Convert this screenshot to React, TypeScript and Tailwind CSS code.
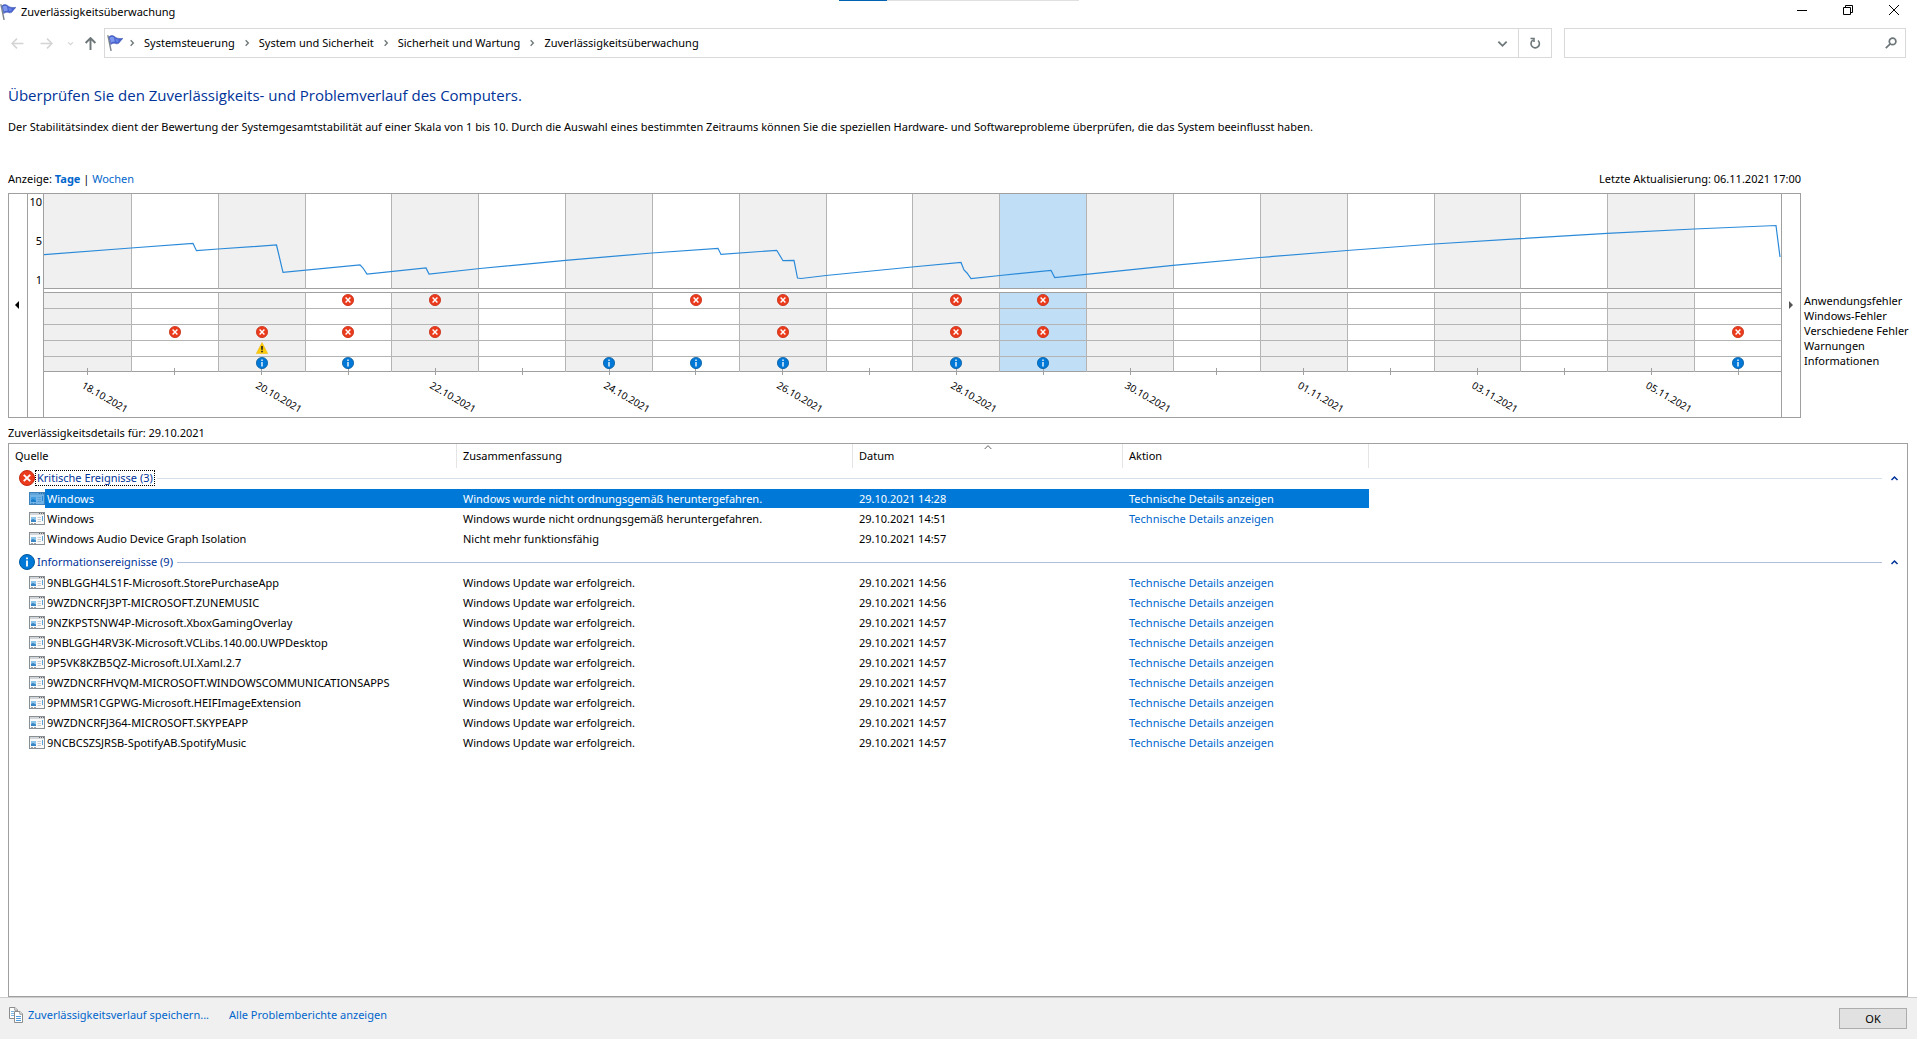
import React from "react";

type Kind = "error" | "warning" | "info";

const CATEGORIES: { label: string; kind: Kind; days: number[] }[] = [
  { label: "Anwendungsfehler", kind: "error", days: [3, 4, 7, 8, 10, 11] },
  { label: "Windows-Fehler", kind: "error", days: [] },
  { label: "Verschiedene Fehler", kind: "error", days: [1, 2, 3, 4, 8, 10, 11, 19] },
  { label: "Warnungen", kind: "warning", days: [2] },
  { label: "Informationen", kind: "info", days: [2, 3, 6, 7, 8, 10, 11, 19] },
];

const DAYS = [
  "18.10.2021", "19.10.2021", "20.10.2021", "21.10.2021", "22.10.2021",
  "23.10.2021", "24.10.2021", "25.10.2021", "26.10.2021", "27.10.2021",
  "28.10.2021", "29.10.2021", "30.10.2021", "31.10.2021", "01.11.2021",
  "02.11.2021", "03.11.2021", "04.11.2021", "05.11.2021", "06.11.2021",
];
const SELECTED_DAY = 11;

const STABILITY =
  "0,60.7 87,54 149,49.500 152.500,56.700 174,55 232.500,51 239,78.300 316,70.800 319,74 323,80 382,74 385,80 436,74.500 521.600,66.300 608,59 674,54.300 677,60.400 732.700,56.300 739,66.700 750,66.300 753.500,84 757,84.500 782,81.500 868,73 917,68.500 920,76 923,79 927,84.700 956,81.500 1007,76.300 1010.700,83.500 1042,80.300 1129,71.300 1216,63.500 1303,56.500 1390,50 1476,44.700 1563,39.300 1650,35 1732,31.500 1736,63";

type Entry = { source: string; summary: string; date: string; action?: boolean; selected?: boolean };

const DOWN = "Windows wurde nicht ordnungsgemäß heruntergefahren.";
const UPDATED = "Windows Update war erfolgreich.";

const CRITICAL: Entry[] = [
  { source: "Windows", summary: DOWN, date: "29.10.2021 14:28", action: true, selected: true },
  { source: "Windows", summary: DOWN, date: "29.10.2021 14:51", action: true },
  { source: "Windows Audio Device Graph Isolation", summary: "Nicht mehr funktionsfähig", date: "29.10.2021 14:57" },
];

const INFORMATION: Entry[] = [
  { source: "9NBLGGH4LS1F-Microsoft.StorePurchaseApp", summary: UPDATED, date: "29.10.2021 14:56", action: true },
  { source: "9WZDNCRFJ3PT-MICROSOFT.ZUNEMUSIC", summary: UPDATED, date: "29.10.2021 14:56", action: true },
  { source: "9NZKPSTSNW4P-Microsoft.XboxGamingOverlay", summary: UPDATED, date: "29.10.2021 14:57", action: true },
  { source: "9NBLGGH4RV3K-Microsoft.VCLibs.140.00.UWPDesktop", summary: UPDATED, date: "29.10.2021 14:57", action: true },
  { source: "9P5VK8KZB5QZ-Microsoft.UI.Xaml.2.7", summary: UPDATED, date: "29.10.2021 14:57", action: true },
  { source: "9WZDNCRFHVQM-MICROSOFT.WINDOWSCOMMUNICATIONSAPPS", summary: UPDATED, date: "29.10.2021 14:57", action: true },
  { source: "9PMMSR1CGPWG-Microsoft.HEIFImageExtension", summary: UPDATED, date: "29.10.2021 14:57", action: true },
  { source: "9WZDNCRFJ364-MICROSOFT.SKYPEAPP", summary: UPDATED, date: "29.10.2021 14:57", action: true },
  { source: "9NCBCSZSJRSB-SpotifyAB.SpotifyMusic", summary: UPDATED, date: "29.10.2021 14:57", action: true },
];

function FlagIcon() {
  return (
    <svg className="size-4 shrink-0" viewBox="0 0 16 16" aria-hidden="true">
      <path d="M1 .8 4 15.5" stroke="#7d858c" strokeWidth="1.4" strokeLinecap="round" />
      <path d="M2 1.800C3.600.4 5.600.2 7.400 1.400 8.600 2.400 9.600 3 10.600 3.200 12.200 3.700 14 3.600 15.900 3.400 14.800 4.800 13.200 5.800 12.400 7.600 11.600 8.800 10 9 8.600 8.600 7 8 5 8.200 3.800 9.600Z" fill="#4763cf" stroke="#3247a8" strokeWidth=".5" />
      <path d="M2.800 2.400C4.200 1.400 5.800 1.400 7 2.400L7.800 6.800C6.400 6.400 5 6.800 4 7.800Z" fill="#7f98ee" />
      <path d="M8.200 3.400 11.800 4.800 11.300 7.200 9 7Z" fill="#6480e4" />
    </svg>
  );
}

function StatusIcon({ kind, className }: { kind: Kind; className: string }) {
  if (kind === "warning")
    return (
      <svg className={className} viewBox="0 0 12 12" aria-hidden="true">
        <path d="M6 .5 11.700 11.500H.300Z" fill="#fbcb09" stroke="#f0b400" strokeWidth=".5" strokeLinejoin="round" />
        <path d="M6 4V7.800M6 8.800V10.300" stroke="#1f1f1f" strokeWidth="1.6" />
      </svg>
    );
  if (kind === "info")
    return (
      <svg className={className} viewBox="0 0 16 16" aria-hidden="true">
        <circle cx="8" cy="8" r="7.500" fill="#0078d7" stroke="#005a9e" />
        <path d="M8 6.600V12.500M8 3.400V5.200" stroke="#fff" strokeWidth="1.800" />
      </svg>
    );
  return (
    <svg className={className} viewBox="0 0 16 16" aria-hidden="true">
      <circle cx="8" cy="8" r="7.500" fill="#eb3b1c" stroke="#c42b12" />
      <path d="m4.800 4.800 6.400 6.400M11.200 4.800 4.800 11.200" stroke="#fff" strokeWidth="1.900" />
    </svg>
  );
}

function AppIcon({ selected }: { selected?: boolean }) {
  return (
    <svg className="h-[13px] w-4 shrink-0" viewBox="0 0 16 13" aria-hidden="true">
      <rect x=".5" y=".5" width="15" height="12" fill="#fafafa" stroke="#8a8f94" />
      <path d="M1 2H15" stroke="#d3d7da" strokeWidth="2" />
      <path d="M10 1.500h1M12 1.500h1M14 1.500h1" stroke="#666" />
      <rect x="2" y="5" width="5" height="5" fill="#8cc4ea" />
      <path d="M2 10V8L4 7l3 1.500V10Z" fill="#3a86c4" />
      <path d="M8.500 5.500H12M8.500 7.500H12M8.500 9.500H12" stroke="#c9cdd0" />
      <path d="M13.500 4V9" stroke="#5aa2da" />
      <path d="M2 11.500H4M5 11.500H7" stroke="#9aa0a5" />
      {selected && <rect width="16" height="13" fill="#0078d7" opacity=".55" />}
    </svg>
  );
}

function Stroke({ d, className, width = 1.5 }: { d: string; className: string; width?: number }) {
  return (
    <svg className={className} viewBox="0 0 12 12" fill="none" stroke="currentColor" strokeWidth={width} aria-hidden="true">
      <path d={d} />
    </svg>
  );
}

function TitleBar() {
  return (
    <header className="relative flex h-6 items-start justify-between">
      <div className="absolute top-0 left-1/2 flex h-px w-60 -translate-x-1/2">
        <span className="w-12 bg-[#0063b1]" />
        <span className="flex-1 bg-[#e0e0e0]" />
      </div>
      <div className="flex items-center gap-[5px] pt-0.5">
        <FlagIcon />
        <span className="leading-5">Zuverlässigkeitsüberwachung</span>
      </div>
      <div className="flex">
        <button aria-label="Minimieren" className="flex h-5 w-[46px] items-center justify-center">
          <Stroke d="M1 6.500H11" width={1} className="size-3" />
        </button>
        <button aria-label="Verkleinern" className="flex h-5 w-[46px] items-center justify-center">
          <Stroke d="M1.500 3.500H8.500V10.500H1.500ZM3.500 3.500V1.500H10.500V8.500H8.500" width={1} className="size-3" />
        </button>
        <button aria-label="Schließen" className="flex h-5 w-[46px] items-center justify-center">
          <Stroke d="M1 1 11 11M11 1 1 11" width={1} className="size-3" />
        </button>
      </div>
    </header>
  );
}

function NavBar() {
  const crumbs = ["Systemsteuerung", "System und Sicherheit", "Sicherheit und Wartung", "Zuverlässigkeitsüberwachung"];
  return (
    <nav className="mt-1 flex h-[30px] items-stretch pr-[11px] pl-[11px]">
      <div className="flex w-[93px] items-center text-[#d4d4d4]">
        <button aria-label="Zurück" className="mr-4">
          <Stroke d="M11.500 6H1M5.500 1.500 1 6 5.500 10.500" className="size-[13px]" />
        </button>
        <button aria-label="Vorwärts" className="mr-[14px]">
          <Stroke d="M.5 6H11M6.500 1.500 11 6 6.500 10.500" className="size-[13px]" />
        </button>
        <button aria-label="Zuletzt besucht" className="mr-2.5">
          <Stroke d="M2 4 6 8 10 4" width={2} className="size-[7px]" />
        </button>
        <button aria-label="Nach oben" className="text-[#6d7678]">
          <Stroke d="M6 12V1M1.500 5.500 6 1 10.500 5.500" width={1.8} className="size-[13px]" />
        </button>
      </div>
      <div className="flex flex-1 items-stretch border border-[#d9d9d9]">
        <div className="flex flex-1 items-center pl-0.5">
          <FlagIcon />
          {crumbs.map((c) => (
            <span key={c} className="flex items-center">
              <Stroke d="M4 2 8 6 4 10" width={2} className="mr-[6px] ml-[5px] size-2 text-[#6d7678]" />
              <a href="#" className="pr-[3px] pl-0.5">{c}</a>
            </span>
          ))}
        </div>
        <button aria-label="Verlauf" className="flex w-8 items-center justify-center text-[#6d7678]">
          <Stroke d="M1.500 4 6 8.500 10.500 4" width={2} className="size-[11px]" />
        </button>
        <button aria-label="Aktualisieren" className="flex w-[33px] items-center justify-center border-l border-[#d9d9d9] text-[#6d7678]">
          <Stroke d="M9 3.500A4.200 4.200 0 1 1 3.800 3.200M1.500 1.500H5V5" width={1.6} className="size-3" />
        </button>
      </div>
      <div className="ml-3 flex w-[342px] items-center border border-[#d9d9d9]">
        <input aria-label="Suchen" className="h-full min-w-0 flex-1 px-2 outline-none" />
        <svg className="mr-2 size-3 text-[#6d7678]" viewBox="0 0 12 12" fill="none" stroke="currentColor" strokeWidth="1.700" aria-hidden="true">
          <circle cx="7.600" cy="4.400" r="3.300" />
          <path d="M5.200 6.800.8 11.200" />
        </svg>
      </div>
    </nav>
  );
}

function columnFill(i: number) {
  if (i === SELECTED_DAY) return "bg-[#c0dff6]";
  return i % 2 === 0 ? "bg-[#f0f0f0]" : "bg-white";
}

function Chart() {
  return (
    <section className="flex pl-2">
      <div className="flex flex-1 border border-[#a0a0a0]">
        <button aria-label="Frühere Tage" className="flex w-[19px] items-center justify-center border-r border-[#a0a0a0] pr-0.5 pb-0.5">
          <svg className="h-2 w-1" viewBox="0 0 4 8" aria-hidden="true"><path d="M4 0V8L0 4Z" /></svg>
        </button>
        <div className="flex h-[95px] w-[15px] flex-col justify-between pr-px pb-px text-right leading-4">
          <span>10</span>
          <span>5</span>
          <span>1</span>
        </div>
        <div className="relative grid flex-1 grid-cols-20 border-x border-[#a0a0a0]">
          {DAYS.map((day, i) => (
            <div key={day} className="flex flex-col">
              <div className={`h-[95px] border-b border-b-[#a0a0a0] ${i > 0 ? "border-l border-l-[#b4b4b4]" : ""} ${columnFill(i)}`} />
              <div className="h-[3px]" />
              <div className={`border-t border-t-[#a0a0a0] ${i > 0 ? "border-l border-l-[#b4b4b4]" : ""} ${columnFill(i)}`}>
                {CATEGORIES.map((c) => (
                  <div key={c.label} className="flex h-4 items-start justify-center border-b border-[#b4b4b4] pt-px last:h-[15px] last:border-[#a0a0a0] last:pt-0">
                    {c.days.includes(i) && <StatusIcon kind={c.kind} className="relative z-10 size-3" />}
                  </div>
                ))}
              </div>
              <div className="relative h-[45px]">
                <span className="absolute -top-1 left-1/2 h-[7px] w-px bg-[#a0a0a0]" />
                {i % 2 === 0 && (
                  <span className="absolute top-1 left-1/2 -ml-1 origin-left rotate-30 text-[10px] leading-4">{day}</span>
                )}
              </div>
            </div>
          ))}
          <svg className="absolute top-0 left-0 h-[94px] w-full" viewBox="0 0 1737 94" preserveAspectRatio="none" aria-hidden="true">
            <polyline points={STABILITY} fill="none" stroke="#2a8ad9" strokeWidth="1.200" vectorEffect="non-scaling-stroke" />
          </svg>
        </div>
        <button aria-label="Spätere Tage" className="flex w-[18px] items-center justify-center pb-0.5">
          <svg className="h-2 w-1" viewBox="0 0 4 8" fill="#555" aria-hidden="true"><path d="M0 0V8L4 4Z" /></svg>
        </button>
      </div>
      <ul className="w-[116px] pt-[100px] pl-[3px] leading-[15px] whitespace-nowrap">
        {CATEGORIES.map((c) => <li key={c.label}>{c.label}</li>)}
      </ul>
    </section>
  );
}

function GroupRow({ kind, label, focused }: { kind: Kind; label: string; focused?: boolean }) {
  return (
    <tr className="align-top">
      <td colSpan={5} className={focused ? "h-[21px] p-0 pt-0.5" : "h-6 p-0 pt-[5px]"}>
        <div className="flex items-center pl-2.5">
          <StatusIcon kind={kind} className="size-4 shrink-0" />
          <span className={`border border-dotted px-px leading-[14px] text-[#003399] ${focused ? "border-black" : "border-transparent"}`}>{label}</span>
          <span className={`ml-0.5 h-px flex-1 ${focused ? "bg-[#d5dfe9]" : "bg-[#b0bfdd]"}`} />
          <button aria-label="Gruppe reduzieren" className="mr-2 ml-2 text-[#003399]">
            <Stroke d="M2 8 6 4 10 8" width={2} className="size-[9px]" />
          </button>
        </div>
      </td>
    </tr>
  );
}

function EntryRow({ entry }: { entry: Entry }) {
  const fill = entry.selected ? "bg-[#0078d7] text-white" : "";
  const cell = `block h-[19px] pl-1.5 leading-[19px] ${fill}`;
  return (
    <tr className="h-5 align-top">
      <td className="p-0">
        <div className="flex items-center pl-5">
          <AppIcon selected={entry.selected} />
          <span className={`h-[19px] flex-1 pl-0.5 leading-[19px] ${fill}`}>{entry.source}</span>
        </div>
      </td>
      <td className="p-0"><span className={cell}>{entry.summary}</span></td>
      <td className="p-0"><span className={cell}>{entry.date}</span></td>
      <td className="p-0">
        <span className={cell}>
          {entry.action && <a href="#" className={entry.selected ? "text-white" : "text-[#0066cc]"}>Technische Details anzeigen</a>}
        </span>
      </td>
      <td className="p-0" />
    </tr>
  );
}

function Details() {
  return (
    <section className="mr-[9px] ml-2 flex-1 border border-[#a0a0a0]">
      <table className="w-full table-fixed border-separate border-spacing-0 whitespace-nowrap">
        <colgroup>
          <col className="w-[448px]" />
          <col className="w-[396px]" />
          <col className="w-[270px]" />
          <col className="w-[246px]" />
          <col />
        </colgroup>
        <thead>
          <tr className="h-6 text-left">
            <th className="border-r border-[#e5e5e5] p-0 pl-1.5 font-normal">Quelle</th>
            <th className="border-r border-[#e5e5e5] p-0 pl-1.5 font-normal">Zusammenfassung</th>
            <th className="relative border-r border-[#e5e5e5] p-0 pl-1.5 font-normal">
              Datum
              <Stroke d="M1 9 6 4 11 9" width={1.4} className="absolute -top-px left-1/2 size-2 -translate-x-1/2 text-[#555]" />
            </th>
            <th className="border-r border-[#e5e5e5] p-0 pl-1.5 font-normal">Aktion</th>
            <th className="p-0" />
          </tr>
        </thead>
        <tbody>
          <GroupRow kind="error" label="Kritische Ereignisse (3)" focused />
          {CRITICAL.map((e) => <EntryRow key={e.date} entry={e} />)}
          <GroupRow kind="info" label="Informationsereignisse (9)" />
          {INFORMATION.map((e) => <EntryRow key={e.source} entry={e} />)}
        </tbody>
      </table>
    </section>
  );
}

function Footer() {
  return (
    <footer className="flex h-[42px] items-start border-t border-[#ccc] bg-[#f0f0f0] pr-[10px] pl-[9px]">
      <svg className="mt-[9px] h-4 w-[14px] shrink-0" viewBox="0 0 14 16" fill="#fff" stroke="#8c8c8c" aria-hidden="true">
        <path d="M.5.5H6L8.500 3V11.500H.500Z" />
        <path d="M5.800.5V3.200H8.500" />
        <path d="M2 4.500H5M2 6.500H5M2 8.500H5" stroke="#79b4e6" />
        <path d="M5.500 4.500H11L13.500 7V15.500H5.500Z" />
        <path d="M10.800 4.500V7.200H13.500" />
        <path d="M7 9.500H12M7 11.500H12M7 13.500H12" stroke="#4f9de0" />
      </svg>
      <a href="#" className="mt-2 ml-[5px] leading-[18px] text-[#0066cc]">Zuverlässigkeitsverlauf speichern...</a>
      <a href="#" className="mt-2 ml-5 leading-[18px] text-[#0066cc]">Alle Problemberichte anzeigen</a>
      <button className="mt-2.5 ml-auto h-[21px] w-[68px] border border-[#adadad] bg-[#e1e1e1] leading-[18px]">OK</button>
    </footer>
  );
}

export default function App() {
  return (
    <div className="flex min-h-screen flex-col bg-white font-['Noto_Sans','Open_Sans',sans-serif] text-[11px] leading-4 text-black">
      <TitleBar />
      <NavBar />
      <h1 className="mt-[27px] pl-2 font-['Open_Sans','Noto_Sans',sans-serif] text-[15px] leading-5 text-[#003399]">Überprüfen Sie den Zuverlässigkeits- und Problemverlauf des Computers.</h1>
      <p className="mt-[14px] pl-2">
        Der Stabilitätsindex dient der Bewertung der Systemgesamtstabilität auf einer Skala von 1 bis 10. Durch die Auswahl eines bestimmten Zeitraums können Sie die speziellen Hardware- und Softwareprobleme überprüfen, die das System beeinflusst haben.
      </p>
      <div className="mt-9 mb-[6px] flex justify-between pr-[116px] pl-2">
        <span>
          Anzeige: <a href="#" className="font-bold text-[#0066cc]">Tage</a> | <a href="#" className="text-[#0066cc]">Wochen</a>
        </span>
        <span>Letzte Aktualisierung: 06.11.2021 17:00</span>
      </div>
      <Chart />
      <p className="mt-[7px] mb-[2px] pl-2">Zuverlässigkeitsdetails für: 29.10.2021</p>
      <Details />
      <Footer />
    </div>
  );
}
